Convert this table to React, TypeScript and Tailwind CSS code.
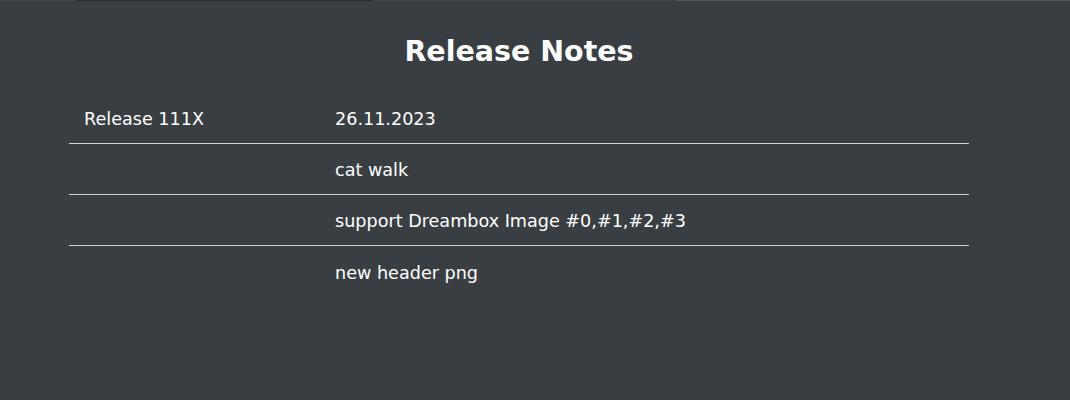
export default function App() {
  const rows = [
    ["Release 111X", "26.11.2023"],
    ["", "cat walk"],
    ["", "support Dreambox Image #0,#1,#2,#3"],
    ["", "new header png"],
  ];
  return (
    <div className="w-[1070px] h-[400px] bg-[#393e42] text-white overflow-hidden" style={{ fontFamily: "Tahoma, 'DejaVu Sans', sans-serif" }}>
      <div className="flex h-px">
        <div className="w-[75px] bg-[#41464a]" />
        <div className="w-[299px] bg-[#2b2e31]" />
        <div className="w-[302px] bg-[#41464a]" />
        <div className="flex-1 bg-[#54585c]" />
      </div>
      <div className="w-[900px] ml-[69px]">
        <h1 className="text-center text-[28.5px] font-bold leading-[34px] mt-[34px] mb-[24px]">Release Notes</h1>
        <div>
          {rows.map((r, i) => (
            <div key={i} className={`flex h-[51px] items-center text-[17.6px] pt-[3px] ${i < rows.length - 1 ? "border-b border-[#d0d0d0]" : ""}`}>
              <div className="w-[266px] pl-[15px]">{r[0]}</div>
              <div>{r[1]}</div>
            </div>
          ))}
        </div>
      </div>
    </div>
  );
}
